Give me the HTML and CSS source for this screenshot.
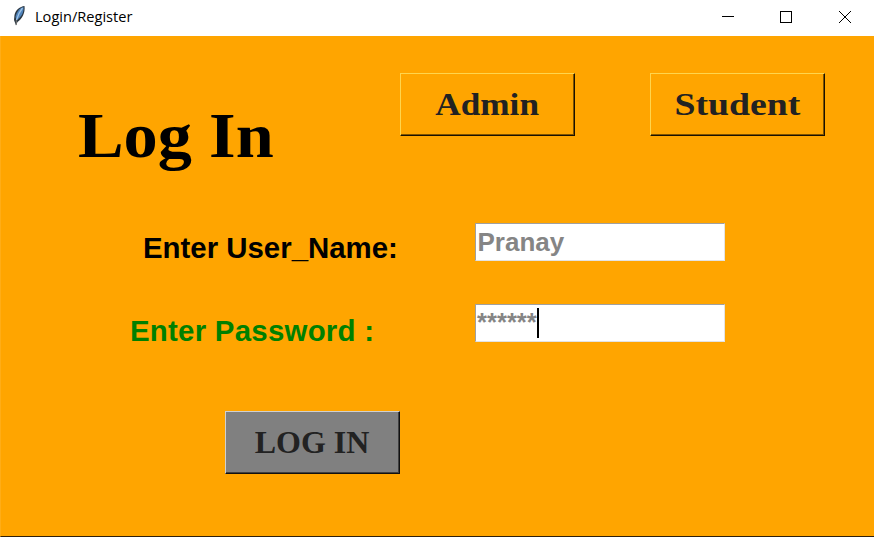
FILE: index.html
```html
<!DOCTYPE html>
<html lang="en">
<head>
<meta charset="utf-8">
<title>Login/Register</title>
<link rel="stylesheet" href="styles.css">
</head>
<body>
<header class="titlebar">
  <svg class="feather" width="14" height="22" viewBox="0 0 14 22">
    <path d="M12.500 1C8 1.500 3.500 5 2.500 10L2 15L4 20.500L5.500 17C10 14 13.500 8 12.500 1Z" fill="#2b3742"/>
    <path d="M11.500 2C7.500 3 4.500 7 3.500 12L4.500 15C9.500 12.500 12 7 11.500 2Z" fill="#4f83bb"/>
    <path d="M10.500 3Q6.500 8 4.500 15" fill="none" stroke="#9dc2e6" stroke-width="1.300"/>
    <path d="M4.300 15V20" stroke="#777" stroke-width="1"/>
  </svg>
  <span class="caption">Login/Register</span>
  <svg class="controls" width="130" height="12" viewBox="0 0 130 12" fill="none" stroke="#000">
    <path d="M0 5.500H12M58.500 .5H69.500V11.500H58.500Z" shape-rendering="crispEdges"/>
    <path d="M117 0L129 12M129 0L117 12"/>
  </svg>
</header>
<main class="window">
  <div class="top">
    <h1 class="title"><span>Log In</span></h1>
    <button class="btn"><span class="admin">Admin</span></button>
    <button class="btn"><span class="student">Student</span></button>
  </div>
  <div class="row user">
    <label>Enter User_Name:</label>
    <div class="entry">Pranay</div>
  </div>
  <div class="row pass">
    <label>Enter Password :</label>
    <div class="entry">******<i class="caret"></i></div>
  </div>
  <button class="btn submit"><span class="login">LOG IN</span></button>
</main>
</body>
</html>
```
FILE: styles.css
```css
* { box-sizing: border-box; }
body { margin: 0; width: 874px; height: 537px; overflow: hidden; background: #fff; }
.titlebar { display: flex; height: 36px; padding-left: 12px; background: #fff; }
.feather { margin-top: 5px; }
.caption { margin-left: 9px; font: 14.6px/33px "Open Sans", "Noto Sans", sans-serif; color: #000; }
.controls { margin: 11px 22px 0 auto; }
.window { height: 501px; background: #ffa500; border-left: 1px solid #ffad17; border-bottom: 1px solid #30200a; }
.top { display: flex; padding-top: 37px; height: 187px; }
.title { flex: none; margin: 27px 0 0 77px; width: 322px; font: bold 63px/72px "Liberation Serif", serif; color: #000; }
.title span { display: inline-block; transform: scaleX(1.085); transform-origin: left; }
.btn {
  flex: none; display: flex; align-items: center; justify-content: center;
  width: 175px; height: 63px; padding: 0 1px 2px 0; margin: 0 75px 0 0;
  background: #ffa500; border: 1px solid; border-color: #ffd54d #1a1100 #1a1100 #ffd54d;
  box-shadow: inset -1px -1px #805300;
  font: bold 32px/36px "Liberation Serif", serif; color: #222;
}
.btn span { display: inline-block; }
.admin { transform: scaleX(1.1); }
.student { transform: scaleX(1.18); }
.row { display: flex; height: 82px; }
.row label { flex: none; width: 331px; margin-left: 142px; padding-top: 8px; font: bold 29.400px/34px "Liberation Sans", sans-serif; }
.pass label { width: 344px; margin-left: 129px; padding-top: 9px; letter-spacing: 0.26px; color: #008000; }
.entry {
  display: flex; width: 250px; height: 38px; margin-left: 1px; padding: 1px 0 0 1.500px;
  background: #fff; border: 1px solid; border-color: #a0a0a0 #e3e3e3 #e3e3e3 #a0a0a0;
  font: bold 26px/34px "Liberation Sans", sans-serif; color: #858585;
}
.pass .entry { margin-top: -1px; padding: 0 0 0 1px; font-size: 25.600px; }
.caret { width: 2px; height: 30px; margin-top: 3px; background: #000; }
.submit { margin: 24px 0 0 224px; background: #808080; border-color: #d0d0d0 #111 #111 #d0d0d0; box-shadow: inset -1px -1px #404040; }
.login { transform: scaleX(1); }
```
